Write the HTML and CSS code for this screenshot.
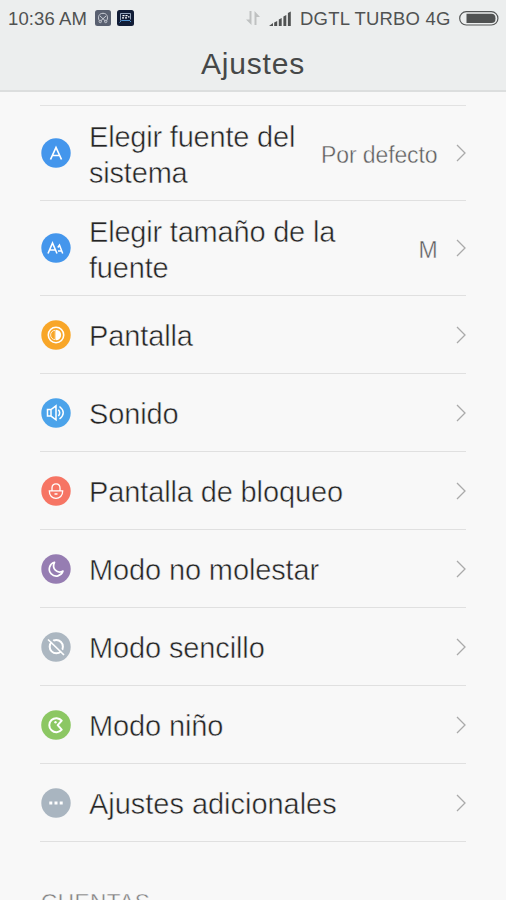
FILE: index.html
```html
<!DOCTYPE html>
<html lang="es">
<head>
<meta charset="utf-8">
<title>Ajustes</title>
<link rel="stylesheet" href="styles.css">
</head>
<body>
<header class="header">
  <div class="status">
    <span class="time">10:36 AM</span>
    <svg class="app-icon" width="16" height="16" viewBox="0 0 16 16"><rect width="16" height="16" rx="2.500" fill="#596070"/><path d="M4.200 10.500C2.500 7 4 3.300 8 3.300s5.500 3.700 3.800 7.200M5 6l5.500 5M11 6l-5.500 5" fill="none" stroke="#d5d8df" stroke-width=".9"/><circle cx="5.300" cy="11.500" r="1.200" fill="none" stroke="#d5d8df" stroke-width=".8"/><circle cx="10.700" cy="11.500" r="1.200" fill="none" stroke="#d5d8df" stroke-width=".8"/></svg>
    <svg class="app-icon" width="17" height="16" viewBox="0 0 17 16"><rect width="17" height="16" rx="2.500" fill="#111c36"/><path d="M3.500 3.500v7M3.500 3.500h10v6M6 10.500h7" fill="none" stroke="#a5b5cc" stroke-width=".9"/><path d="M2.500 12.500l2-2h8l1.500 1.500" fill="none" stroke="#4f91cf" stroke-width="1"/><path d="M5.500 5h2v1.300h-2zM8.500 5h2v1.300h-2zM5 7.300h2v1.300H5zM8 7.300h2v1.300H8zM11 6.200h1.500v1.300H11z" fill="#fff"/></svg>
    <span class="spacer"></span>
    <svg class="arrows" width="16" height="16" viewBox="0 0 16 16"><path d="M6.500 1v14L1 9.500h3.500V1zM9.500 15V1L15 7h-3.500v8z" fill="#bfc1c1"/></svg>
    <svg class="signal" width="23" height="15" viewBox="0 0 23 15"><path d="M0 15l4-3v3zM5.200 11.500L8.200 10v5H5.200zM9.800 8.500L12.700 7v8H9.800zM14.400 5.500L17.300 4v11h-2.900zM18.900 2l2.900-1.500V15h-2.900z" fill="#505252"/></svg>
    <span class="carrier">DGTL TURBO 4G</span>
    <svg class="battery" width="40" height="15" viewBox="0 0 40 15"><rect x=".7" y=".7" width="38.200" height="13.300" rx="6.600" fill="none" stroke="#555757" stroke-width="1.200"/><path d="M7.500 2.800h25q4 0 4 4.600t-4 4.600h-25z" fill="#505252"/></svg>
  </div>
  <h1 class="title">Ajustes</h1>
</header>
<main class="list">
  <div class="row tall">
    <svg class="icon" viewBox="0 0 30 30"><circle cx="15" cy="15" r="14.700" fill="#4496ec"/><path d="M9.500 21.500L15 9.500 20.500 21.500M11.300 17.500h7.400" fill="none" stroke="#fff" stroke-width="1.700"/></svg>
    <span class="label">Elegir fuente del<br>sistema</span><span class="value">Por defecto</span>
    <svg class="chevron" viewBox="0 0 10 18"><path d="M1 1l8 8-8 8"/></svg>
  </div>
  <div class="row tall">
    <svg class="icon" viewBox="0 0 30 30"><circle cx="15" cy="15" r="14.700" fill="#4496ec"/><path d="M7 20.500L11.500 10 16 20.500M8.500 17h6" fill="none" stroke="#fff" stroke-width="1.600"/><path d="M16.800 14.500l1.700-2.500 3.200 8.500M17 18h3.500" fill="none" stroke="#fff" stroke-width="1.500"/></svg>
    <span class="label">Elegir tamaño de la<br>fuente</span><span class="value">M</span>
    <svg class="chevron" viewBox="0 0 10 18"><path d="M1 1l8 8-8 8"/></svg>
  </div>
  <div class="row">
    <svg class="icon" viewBox="0 0 30 30"><circle cx="15" cy="15" r="14.700" fill="#f8a628"/><circle cx="15" cy="15" r="7.700" fill="none" stroke="#fff" stroke-width="1.600"/><path d="M14.300 10.300a4.700 4.700 0 0 0 0 9.400z" fill="none" stroke="#fff" stroke-width=".8"/><path d="M15 9.800a5.200 5.200 0 0 1 0 10.400z" fill="#fff"/></svg>
    <span class="label">Pantalla</span>
    <svg class="chevron" viewBox="0 0 10 18"><path d="M1 1l8 8-8 8"/></svg>
  </div>
  <div class="row">
    <svg class="icon" viewBox="0 0 30 30"><circle cx="15" cy="15" r="14.700" fill="#4ba3ea"/><path d="M6.500 11.500h3.500l5-3.700v14l-5-3.700H6.500zM10 11.500v6.600M17.300 11.700q2.800 3.100 0 6.300M18.500 8.500q7.500 6.200 0 12.500" fill="none" stroke="#fff" stroke-width="1.500"/></svg>
    <span class="label">Sonido</span>
    <svg class="chevron" viewBox="0 0 10 18"><path d="M1 1l8 8-8 8"/></svg>
  </div>
  <div class="row">
    <svg class="icon" viewBox="0 0 30 30"><circle cx="15" cy="15" r="14.700" fill="#f67564"/><path d="M8.300 14.800h13.400c.3 10.200-13.700 10.200-13.400 0zM11 14.500v-2.500c0-5.600 8-5.600 8 0v2.500M13.500 18h3" fill="none" stroke="#fff" stroke-width="1.300"/></svg>
    <span class="label">Pantalla de bloqueo</span>
    <svg class="chevron" viewBox="0 0 10 18"><path d="M1 1l8 8-8 8"/></svg>
  </div>
  <div class="row">
    <svg class="icon" viewBox="0 0 30 30"><circle cx="15" cy="15" r="14.700" fill="#967db2"/><path d="M13.500 8.300a7 7 0 1 0 8.500 8.800c-6 3-11.500-2.500-8.500-8.800z" fill="none" stroke="#fff" stroke-width="1.700" stroke-linejoin="round"/></svg>
    <span class="label">Modo no molestar</span>
    <svg class="chevron" viewBox="0 0 10 18"><path d="M1 1l8 8-8 8"/></svg>
  </div>
  <div class="row">
    <svg class="icon" viewBox="0 0 30 30"><circle cx="15" cy="15" r="14.700" fill="#acb7c1"/><circle cx="15.300" cy="14.700" r="6.600" fill="none" stroke="#fff" stroke-width="2"/><path d="M8.500 6.500l15 15" stroke="#acb7c1" stroke-width="2"/><path d="M7 7.500l16 15.500" stroke="#fff" stroke-width="1.700"/></svg>
    <span class="label">Modo sencillo</span>
    <svg class="chevron" viewBox="0 0 10 18"><path d="M1 1l8 8-8 8"/></svg>
  </div>
  <div class="row">
    <svg class="icon" viewBox="0 0 30 30"><circle cx="15" cy="15" r="14.800" fill="#8cc763"/><path d="M20.700 10.700a7 7 0 1 0 0 8.900l-4-4.400z" fill="none" stroke="#fff" stroke-width="2" stroke-linejoin="round"/><circle cx="14.500" cy="12.300" r="1.200" fill="#fff"/></svg>
    <span class="label">Modo niño</span>
    <svg class="chevron" viewBox="0 0 10 18"><path d="M1 1l8 8-8 8"/></svg>
  </div>
  <div class="row">
    <svg class="icon" viewBox="0 0 30 30"><circle cx="15" cy="15" r="14.700" fill="#a9b5c0"/><path d="M8.300 13.500h3v3h-3zM13.500 13.500h3v3h-3zM18.700 13.500h3v3h-3z" fill="#fff"/></svg>
    <span class="label wide">Ajustes adicionales</span>
    <svg class="chevron" viewBox="0 0 10 18"><path d="M1 1l8 8-8 8"/></svg>
  </div>
</main>
<h2 class="section">CUENTAS</h2>
</body>
</html>
```
FILE: styles.css
```css
* { box-sizing: border-box; }
html { height: 100%; overflow: hidden; }
body {
  margin: 0;
  height: 900px;
  overflow: hidden;
  background: #f8f8f8;
  color: #242424;
  font-family: "Liberation Sans", Arial, sans-serif;
}
.header {
  height: 92px;
  background: #eceeee;
  border-bottom: 2px solid #dcdede;
}
.status {
  height: 36px;
  padding: 0 7px 0 8px;
  display: flex;
  align-items: center;
  font-size: 18.500px;
  color: #505252;
  white-space: nowrap;
}
.time { width: 87px; letter-spacing: .1px; padding-top: 1px; }
.app-icon { flex: none; margin-right: 6px; }
.spacer { flex: 1; }
.arrows { margin-right: 8px; }
.signal { margin-right: 8px; }
.carrier { width: 152px; margin-right: 7px; letter-spacing: .2px; padding-top: 1px; }
.title {
  margin: 0;
  padding-top: 11px;
  text-align: center;
  font-size: 30px;
  line-height: 34px;
  font-weight: 400;
  letter-spacing: .8px;
  color: #464848;
}
.list {
  margin: 13px 40px 0 40px;
  border-top: 1px solid #e2e2e2;
}
.row {
  height: 78px;
  display: flex;
  align-items: center;
  border-bottom: 1px solid #e0e0e0;
}
.row.tall { height: 95px; }
.icon { width: 30px; height: 30px; flex: none; margin: 0 18.500px 0 .5px; }
.label {
  flex: 1;
  padding-top: 3px;
  font-size: 29px;
  line-height: 36px;
  letter-spacing: -.13px;
  white-space: nowrap;
  -webkit-text-stroke: .5px #f8f8f8;
}
.tall .label { letter-spacing: -.2px; }
.label.wide { letter-spacing: -.03px; }
.value {
  padding-top: 4px;
  margin-right: 18px;
  font-size: 23px;
  letter-spacing: -.1px;
  color: #5c5c5c;
  -webkit-text-stroke: .4px #f8f8f8;
}
.chevron { width: 10px; height: 18px; flex: none; margin-right: .5px; }
.chevron path { fill: none; stroke: #aaa; stroke-width: 1.300; }
.section {
  margin: 47px 0 0 41px;
  font-size: 22.500px;
  line-height: 26px;
  font-weight: 400;
  letter-spacing: .5px;
  color: #808080;
  -webkit-text-stroke: .4px #f8f8f8;
}
```
